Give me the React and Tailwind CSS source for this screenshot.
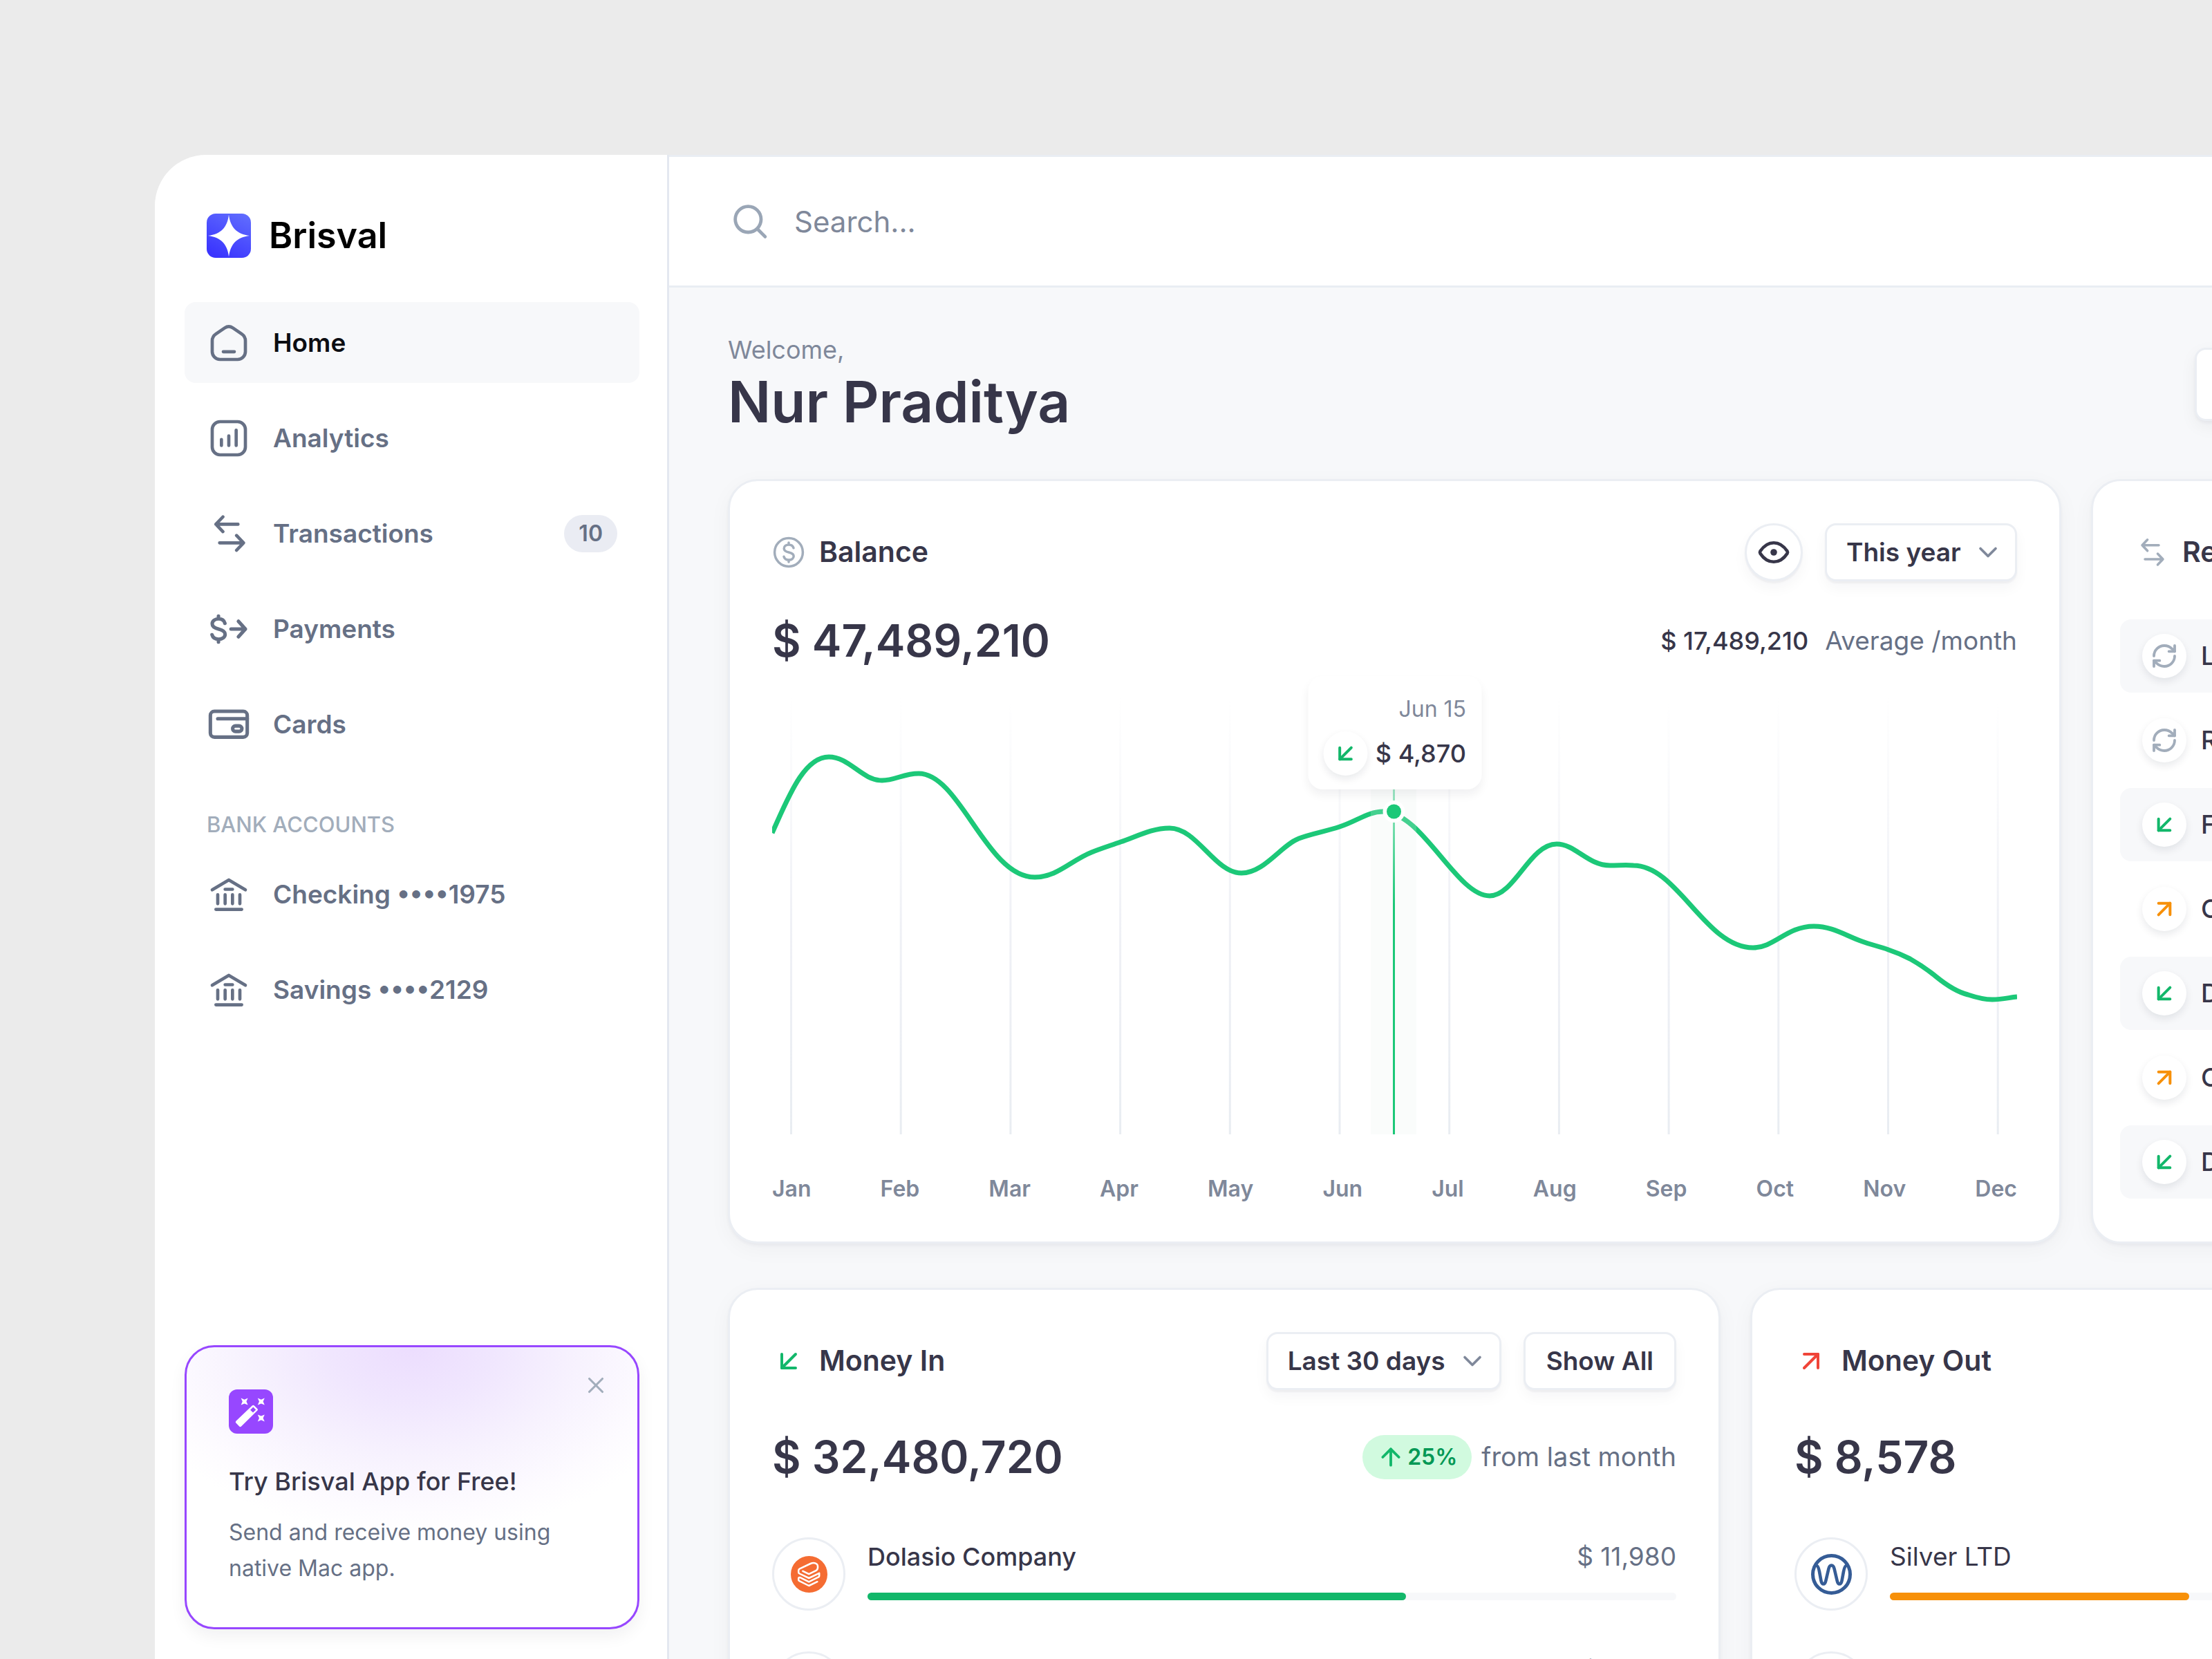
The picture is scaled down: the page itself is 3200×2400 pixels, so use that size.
import { ArrowDownLeft, ArrowUp, ArrowUpRight, ChevronDown, RefreshCw, X } from 'lucide-react';

const months = ['Jan', 'Feb', 'Mar', 'Apr', 'May', 'Jun', 'Jul', 'Aug', 'Sep', 'Oct', 'Nov', 'Dec'];

const recent = [
  { type: 'sync', name: 'Loan payment' },
  { type: 'sync', name: 'Rent payment' },
  { type: 'in', name: 'Freelance work' },
  { type: 'out', name: 'Office supplies' },
  { type: 'in', name: 'Dolasio Company' },
  { type: 'out', name: 'Office lunch' },
  { type: 'in', name: 'Dividends' },
];

function Icon({ className, strokeWidth = 1.75, children }) {
  return (
    <svg
      viewBox="0 0 24 24"
      fill="none"
      stroke="currentColor"
      strokeWidth={strokeWidth}
      strokeLinecap="round"
      strokeLinejoin="round"
      className={`shrink-0 ${className}`}
      aria-hidden="true"
    >
      {children}
    </svg>
  );
}

function DollarPath() {
  return (
    <path d="M6.4 5v1.4M6.4 17.6V19M9.9 8.9C9.5 7.4 8.2 6.5 6.5 6.5 4.5 6.5 3 7.6 3 9.2c0 1.7 1.4 2.3 3.4 2.8 2.1.5 3.6 1.1 3.6 2.8 0 1.6-1.5 2.7-3.5 2.7-1.8 0-3.2-.9-3.6-2.4" />
  );
}

function HomeIcon() {
  return (
    <Icon className="size-16">
      <path d="M9.8 3.9 5 7.2C3.7 8.1 3 9.3 3 10.9V16.8A4.2 4.2 0 0 0 7.2 21H16.8A4.2 4.2 0 0 0 21 16.8V10.9C21 9.3 20.3 8.1 19 7.2L14.2 3.9C12.7 2.9 11.3 2.9 9.8 3.9Z" />
      <path d="M9 16.8h6" />
    </Icon>
  );
}

function AnalyticsIcon() {
  return (
    <Icon className="size-16">
      <rect x="3" y="3" width="18" height="18" rx="4.2" />
      <path d="M8 15.9v-3.2M12 15.9v-5.2M16 15.9V7.6" />
    </Icon>
  );
}

function SwapIcon({ className }) {
  return (
    <Icon className={className}>
      <path d="M17 6.9H5M8.8 2.9 5 6.9l3.8 4M7 17h13M16.2 13l3.8 4-3.8 4" />
    </Icon>
  );
}

function PaymentsIcon() {
  return (
    <Icon className="size-16" strokeWidth={1.9}>
      <DollarPath />
      <path d="M13.2 12H21M17.2 7.8 21 12l-3.8 4.2" />
    </Icon>
  );
}

function CardsIcon() {
  return (
    <Icon className="size-16" strokeWidth={1.9}>
      <rect x="2" y="4.9" width="20" height="14" rx="2.2" />
      <path d="M6 8.9h16" />
      <rect x="14.1" y="12.8" width="5" height="3" rx="1.5" />
    </Icon>
  );
}

function BankIcon() {
  return (
    <Icon className="size-16">
      <path d="M3 9.5 12 4.1l9 5.4M10 9.2h4M6 12.1V17M10 12.1V17M14 12.1V17M18 12.1V17M5 20.1h14" />
    </Icon>
  );
}

function Logo() {
  return (
    <svg viewBox="0 0 64 64" className="size-16" aria-hidden="true">
      <defs>
        <linearGradient id="logo" x1="0.3" y1="1" x2="0.8" y2="0">
          <stop offset="0" stopColor="#3a34fe" />
          <stop offset="1" stopColor="#5f6bfe" />
        </linearGradient>
      </defs>
      <rect width="64" height="64" rx="13" fill="url(#logo)" />
      <path d="M32 1.5C34 20 44 30 62 32C44 34 34 44 32 62.5C30 44 20 34 2 32C20 30 30 20 32 1.5Z" fill="#fff" />
    </svg>
  );
}

function WandIcon() {
  return (
    <svg viewBox="0 0 64 64" className="size-16" aria-hidden="true">
      <rect width="64" height="64" rx="12" fill="#9747ff" />
      <g fill="#fff">
        <path d="M34 23.3Q35.3 22 36.6 23.3L41.4 28Q42.7 29.3 41.4 30.6L18 53.6Q16.6 55 15.2 53.6L10.4 48.6Q9 47.2 10.4 45.8Z" />
        <path d="M17.6 12.6 22.6 14.8 27.6 12.6 25.4 17.6 27.6 22.6 22.6 20.4 17.6 22.6 19.8 17.6Z" />
        <path d="M41.8 12.6 46.8 14.8 51.8 12.6 49.6 17.6 51.8 22.6 46.8 20.4 41.8 22.6 44 17.6Z" />
        <path d="M41.8 36.4 46.8 38.6 51.8 36.4 49.6 41.4 51.8 46.4 46.8 44.2 41.8 46.4 44 41.4Z" />
      </g>
      <path d="M35.3 25.6 39.2 29.4 35 33.6 31.1 29.8Z" fill="#9747ff" />
    </svg>
  );
}

function DolasioLogo() {
  return (
    <svg viewBox="0 0 53 53" className="size-[53px]" aria-hidden="true">
      <circle cx="26.5" cy="26.5" r="26.5" fill="#f56c32" />
      <path
        d="M17.4 21.8 26.2 26.2 37 20.8C39.6 19 40.2 12.4 36.4 10.8 33.6 9.4 31.2 9.8 28.6 11L13 18.4Q11.2 19.3 11.2 21V23.4Q11.2 24.8 12.6 25.5L26.2 32 41.2 24.8V29Q41.2 29.8 40.2 30.3L26.2 37.4 13.6 31.2Q11.2 30.4 11.2 32.4V34.4Q11.2 35.6 12.4 36.2L26.2 43 38.4 37.2"
        fill="none"
        stroke="#fff"
        strokeWidth="2.5"
        strokeLinecap="round"
        strokeLinejoin="round"
      />
    </svg>
  );
}

function SilverLogo() {
  return (
    <svg viewBox="0 0 59 59" className="size-[59px]" fill="none" stroke="#355c96" aria-hidden="true">
      <circle cx="29.5" cy="29.5" r="27" strokeWidth="5" />
      <path
        d="M6.5 16.5C9.6 16 11 20 12 25.5L14.4 38.5C15.7 45.2 20 45.2 21.4 38.5L25.4 21.5C27 14.9 32 14.9 33.6 21.5L37.6 38.5C39 45.2 43.3 45.2 44.6 38.5L47 25.5C48 20 49.4 16 52.5 16.5"
        strokeWidth="4.6"
      />
    </svg>
  );
}

function NavItem({ icon, label, active, count }) {
  return (
    <a
      href="#"
      className={`flex h-[117px] items-center gap-8 rounded-2xl px-8 text-[37px] font-semibold text-[#667085] ${
        active ? 'bg-[#f7f8fa]' : ''
      }`}
    >
      {icon}
      <span className={active ? 'text-[#0c0d12]' : ''}>{label}</span>
      {count && (
        <span className="ml-auto flex h-[54px] items-center rounded-full bg-[#eaecf3] px-[21px] text-[32px]">
          {count}
        </span>
      )}
    </a>
  );
}

function Sidebar() {
  return (
    <aside className="flex w-[744px] shrink-0 flex-col rounded-tl-[74px] border-r-[3px] border-[#e4e8f0] bg-white pt-[85px] pr-10 pb-[43px] pl-[43px]">
      <div className="flex items-center gap-[26px] px-8">
        <Logo />
        <span className="text-[52px] leading-[64px] font-semibold text-black">Brisval</span>
      </div>
      <nav className="mt-16 flex flex-col gap-[21px]">
        <NavItem icon={<HomeIcon />} label="Home" active />
        <NavItem icon={<AnalyticsIcon />} label="Analytics" />
        <NavItem icon={<SwapIcon className="size-16" />} label="Transactions" count={10} />
        <NavItem icon={<PaymentsIcon />} label="Payments" />
        <NavItem icon={<CardsIcon />} label="Cards" />
        <h2 className="mt-11 px-8 text-[31px] leading-[43px] font-medium text-[#a2adbb]">BANK ACCOUNTS</h2>
        <NavItem icon={<BankIcon />} label="Checking ••••1975" />
        <NavItem icon={<BankIcon />} label="Savings ••••2129" />
      </nav>
      <section className="relative mt-auto rounded-[43px] border-[3px] border-[#9747ff] bg-white bg-[radial-gradient(ellipse_64%_68%_at_50%_0%,#ecddfe_0%,#f0e6fe_28%,#f7f2fe_58%,#fdfbff_85%,#ffffff_100%)] px-[61px] pt-[61px] pb-[59px] shadow-[0_10px_24px_rgba(16,24,40,0.06)]">
        <button type="button" aria-label="Close" className="absolute top-9 right-[41px] text-[#a2adbb]">
          <X className="size-[38px]" strokeWidth={2} />
        </button>
        <WandIcon />
        <h3 className="mt-[43px] text-[36px] leading-[53px] font-medium text-[#373649]">Try Brisval App for Free!</h3>
        <p className="mt-[21px] text-[32px] leading-[52px] text-[#667085]">
          Send and receive money using native Mac app.
        </p>
      </section>
    </aside>
  );
}

function Card({ className, children }) {
  return (
    <section
      className={`rounded-[43px] border-[3px] border-[#ebeef3] bg-white p-[61px] shadow-[0_3px_4px_rgba(16,24,40,0.04),0_8px_32px_rgba(16,24,40,0.04)] ${className}`}
    >
      {children}
    </section>
  );
}

function CardTitle({ icon, children }) {
  return (
    <div className="flex h-[84px] items-center gap-5">
      {icon}
      <h2 className="text-[41px] font-semibold whitespace-nowrap text-[#373649]">{children}</h2>
    </div>
  );
}

function Select({ label, value }) {
  return (
    <div className="relative">
      <select
        aria-label={label}
        className="h-[84px] appearance-none rounded-2xl border-[3px] border-[#ebeef3] bg-white pr-[78px] pl-[28px] text-[37px] font-semibold text-[#373649] shadow-[0_3px_2px_rgba(16,24,40,0.04),0_10px_20px_rgba(16,24,40,0.04)]"
      >
        <option>{value}</option>
      </select>
      <ChevronDown
        className="pointer-events-none absolute top-5 right-5 size-11 text-[#7f889a]"
        strokeWidth={2}
      />
    </div>
  );
}

function TypeIcon({ type }) {
  return (
    <span className="flex size-16 shrink-0 items-center justify-center rounded-full bg-white shadow-[0_5px_12px_rgba(16,24,40,0.09)]">
      {type === 'sync' && <RefreshCw className="size-10 text-[#a2adbb]" strokeWidth={2.3} />}
      {type === 'in' && <ArrowDownLeft className="size-10 text-[#12b76a]" strokeWidth={2.4} />}
      {type === 'out' && <ArrowUpRight className="size-10 text-[#f79009]" strokeWidth={2.4} />}
    </span>
  );
}

function BalanceChart() {
  return (
    <div className="relative">
      <svg viewBox="0 0 1801 672" className="block h-auto w-full" aria-label="Balance by month">
        <defs>
          <linearGradient id="grid" gradientUnits="userSpaceOnUse" x1="0" y1="40" x2="0" y2="672">
            <stop offset="0" stopColor="#e9ebf2" stopOpacity="0" />
            <stop offset="0.5" stopColor="#e9ebf2" stopOpacity="0.7" />
            <stop offset="1" stopColor="#e9edf2" />
          </linearGradient>
          <linearGradient id="marker" gradientUnits="userSpaceOnUse" x1="0" y1="170" x2="0" y2="340">
            <stop offset="0" stopColor="#1cc878" stopOpacity="0.4" />
            <stop offset="1" stopColor="#1cc878" />
          </linearGradient>
        </defs>
        {months.map((month, i) => (
          <rect key={month} x={26 + i * 158.7} y="40" width="3" height="632" fill="url(#grid)" />
        ))}
        <path
          d="M0 236C22 188 45 126 82 126C112 126 130 160 159 160C178 160 190 150 212 150C272 150 310 300 380 300C412 300 432 276 462 264C474 259 490 254 504 249C526 242 548 229 575 229C615 229 640 294 679 294C712 294 736 254 762 244C780 237 800 234 821 227C846 219 862 205 884 205C940 205 990 327 1038 327C1074 327 1096 252 1135 252C1162 252 1180 283 1212 283C1226 283 1236 282 1246 283C1310 283 1350 402 1419 402C1450 402 1468 371 1507 371C1534 371 1552 384 1577 393C1590 398 1602 400 1615 405C1627 409 1636 413 1646 418C1660 426 1672 434 1684 444C1700 457 1714 466 1730 470C1742 474 1752 477 1765 477C1780 477 1790 474 1801 473"
          fill="none"
          stroke="#1cc878"
          strokeWidth="7"
        />
        <rect x="866" y="40" width="66" height="632" fill="#e4f0ea" fillOpacity="0.2" />
        <rect x="898" y="170" width="3" height="502" fill="url(#marker)" />
        <circle cx="899.5" cy="205" r="16" fill="#fff" />
        <circle cx="899.5" cy="205" r="10.5" fill="#1cc878" />
      </svg>
      <div className="absolute top-[9px] left-1/2 flex w-[251px] -translate-x-1/2 flex-col items-end gap-2 rounded-[21px] bg-white px-[22px] pt-6 pb-5 shadow-[0_8px_14px_rgba(16,24,40,0.06)]">
        <span className="text-[32px] leading-[48px] text-[#7f889a]">Jun 15</span>
        <div className="flex w-full items-center justify-between">
          <TypeIcon type="in" />
          <span className="text-[36px] font-medium text-[#373649]">$ 4,870</span>
        </div>
      </div>
    </div>
  );
}

function BalanceCard() {
  return (
    <Card className="w-[1929px] shrink-0">
      <div className="flex items-center justify-between">
        <CardTitle
          icon={
            <Icon className="size-12 text-[#a2adbb]">
              <circle cx="12" cy="12" r="10.2" />
              <g transform="translate(5.6 0)">
                <DollarPath />
              </g>
            </Icon>
          }
        >
          Balance
        </CardTitle>
        <div className="flex items-center gap-8">
          <button
            type="button"
            aria-label="Hide balance"
            className="flex size-[84px] items-center justify-center rounded-full border-[3px] border-[#ebeef3] bg-white text-[#373649] shadow-[0_3px_2px_rgba(16,24,40,0.04),0_10px_20px_rgba(16,24,40,0.04)]"
          >
            <Icon className="size-12" strokeWidth={2.3}>
              <path d="M2.2 11.2C4.6 7.6 7.8 5.1 12 5.1s7.4 2.5 9.8 6.1q.5.8 0 1.6C19.4 16.4 16.2 18.9 12 18.9s-7.4-2.5-9.8-6.1q-.5-.8 0-1.6Z" />
              <circle cx="12" cy="12" r="2.4" fill="currentColor" stroke="none" />
            </Icon>
          </button>
          <Select label="Period" value="This year" />
        </div>
      </div>
      <div className="mt-[43px] flex items-center justify-between">
        <p className="text-[64px] leading-[85px] font-semibold text-[#373649]">$ 47,489,210</p>
        <p className="flex items-baseline gap-6 text-[37px] text-[#667085]">
          <span className="text-[36px] font-medium text-[#373649]">$ 17,489,210</span>
          Average /month
        </p>
      </div>
      <BalanceChart />
      <div className="mt-16 flex justify-between text-[32px] leading-[30px] font-semibold text-[#7f889a]">
        {months.map((month) => (
          <span key={month}>{month}</span>
        ))}
      </div>
    </Card>
  );
}

function RecentCard() {
  return (
    <Card className="min-w-0 flex-1">
      <CardTitle icon={<SwapIcon className="size-12 text-[#a2adbb]" />}>Recent Transactions</CardTitle>
      <ul className="-mx-[22px] mt-[55px] flex flex-col gap-4">
        {recent.map((item, i) => (
          <li
            key={i}
            className="flex h-[106px] items-center gap-[21px] rounded-2xl px-8 text-[37px] font-medium whitespace-nowrap text-[#373649] odd:bg-[#f7f8fa]"
          >
            <TypeIcon type={item.type} />
            {item.name}
          </li>
        ))}
      </ul>
    </Card>
  );
}

function CompanyRow({ logo, name, amount, percent, nameClass, barClass }) {
  return (
    <li className="flex gap-8">
      <span className="flex size-[106px] shrink-0 items-center justify-center rounded-full border-[3px] border-[#ebeef3]">
        {logo}
      </span>
      <div className="flex-1">
        <div className="flex h-14 items-center justify-between text-[#667085]">
          <span className={`text-[#373649] ${nameClass}`}>{name}</span>
          <span className="text-[37px]">{amount}</span>
        </div>
        <div className="mt-6 h-[11px] rounded-full bg-[#f7f8fa]">
          <div className={`h-full rounded-full ${barClass}`} style={{ width: `${percent}%` }} />
        </div>
      </div>
    </li>
  );
}

function MoneyCard({ icon, title, total, change, nameClass, barClass, rows }) {
  return (
    <Card className="flex-1">
      <div className="flex items-center justify-between">
        <CardTitle icon={icon}>{title}</CardTitle>
        <div className="flex items-center gap-8">
          <Select label={`${title} period`} value="Last 30 days" />
          <button
            type="button"
            className="h-[84px] rounded-2xl border-[3px] border-[#ebeef3] bg-white px-[30px] text-[37px] font-semibold text-[#373649] shadow-[0_3px_2px_rgba(16,24,40,0.04),0_10px_20px_rgba(16,24,40,0.04)]"
          >
            Show All
          </button>
        </div>
      </div>
      <div className="mt-[54px] flex items-center justify-between">
        <p className="text-[64px] leading-[85px] font-semibold text-[#373649]">{total}</p>
        <p className="flex items-center gap-3.5 text-[38px] text-[#667085]">
          <span className="flex h-16 items-center gap-1 rounded-full bg-[#d1fadf] px-[21px] text-[32px] font-semibold text-[#039855]">
            <ArrowUp className="size-10 text-[#12b76a]" strokeWidth={2.3} />
            {change}
          </span>
          from last month
        </p>
      </div>
      <ul className="mt-[74px] flex flex-col gap-[59px]">
        {rows.map((row) => (
          <CompanyRow key={row.name} {...row} nameClass={nameClass} barClass={barClass} />
        ))}
      </ul>
    </Card>
  );
}

export default function App() {
  return (
    <div className="h-screen overflow-hidden bg-[#ebebeb] pt-56 pl-56 font-[Inter,sans-serif]">
      <div className="flex h-full w-[120vw] rounded-tl-[74px]">
        <Sidebar />
        <main className="min-w-0 flex-1 bg-[#f7f8fa]">
          <header className="flex h-48 items-center gap-8 border-y-[3px] border-[#e9edf3] bg-white px-[85px]">
            <label htmlFor="search" className="text-[#9aa6b6]">
              <Icon className="size-16" strokeWidth={1.8}>
                <circle cx="11" cy="11" r="7" />
                <path d="m16.2 16.4 4 4" />
              </Icon>
            </label>
            <input
              id="search"
              type="search"
              placeholder="Search..."
              className="flex-1 text-[42px] outline-none placeholder:text-[#7f889a]"
            />
          </header>
          <div className="px-[85px] pt-16 pr-24">
            <div className="flex items-center">
              <div className="flex-1">
                <p className="text-[36px] leading-[52px] text-[#7f889a]">Welcome,</p>
                <h1 className="text-[82px] leading-[100px] font-semibold text-[#373649]">Nur Praditya</h1>
              </div>
              <button
                type="button"
                className="h-[106px] w-[793px] rounded-2xl border-[3px] border-[#ebeef3] bg-white text-[37px] font-semibold text-[#373649] shadow-[0_3px_4px_rgba(16,24,40,0.04),0_8px_24px_rgba(16,24,40,0.05)]"
              >
                Move Money
              </button>
            </div>
            <div className="mt-[61px] flex gap-[43px]">
              <BalanceCard />
              <RecentCard />
            </div>
            <div className="mt-16 flex gap-[43px]">
              <MoneyCard
                icon={<ArrowDownLeft className="size-12 text-[#12b76a]" strokeWidth={2} />}
                title="Money In"
                total="$ 32,480,720"
                change="25%"
                nameClass="text-[36px] font-medium"
                barClass="bg-[#12b76a]"
                rows={[
                  { logo: <DolasioLogo />, name: 'Dolasio Company', amount: '$ 11,980', percent: 66.6 },
                  { name: 'Westal Group', amount: '$ 8,240', percent: 48 },
                ]}
              />
              <MoneyCard
                icon={<ArrowUpRight className="size-12 text-[#f04438]" strokeWidth={2} />}
                title="Money Out"
                total="$ 8,578"
                change="12%"
                nameClass="text-[37px]"
                barClass="bg-[#f79009]"
                rows={[
                  { logo: <SilverLogo />, name: 'Silver LTD', amount: '$ 3,120', percent: 37 },
                  { name: 'Nordic Cloud', amount: '$ 1,980', percent: 24 },
                ]}
              />
            </div>
          </div>
        </main>
      </div>
    </div>
  );
}
